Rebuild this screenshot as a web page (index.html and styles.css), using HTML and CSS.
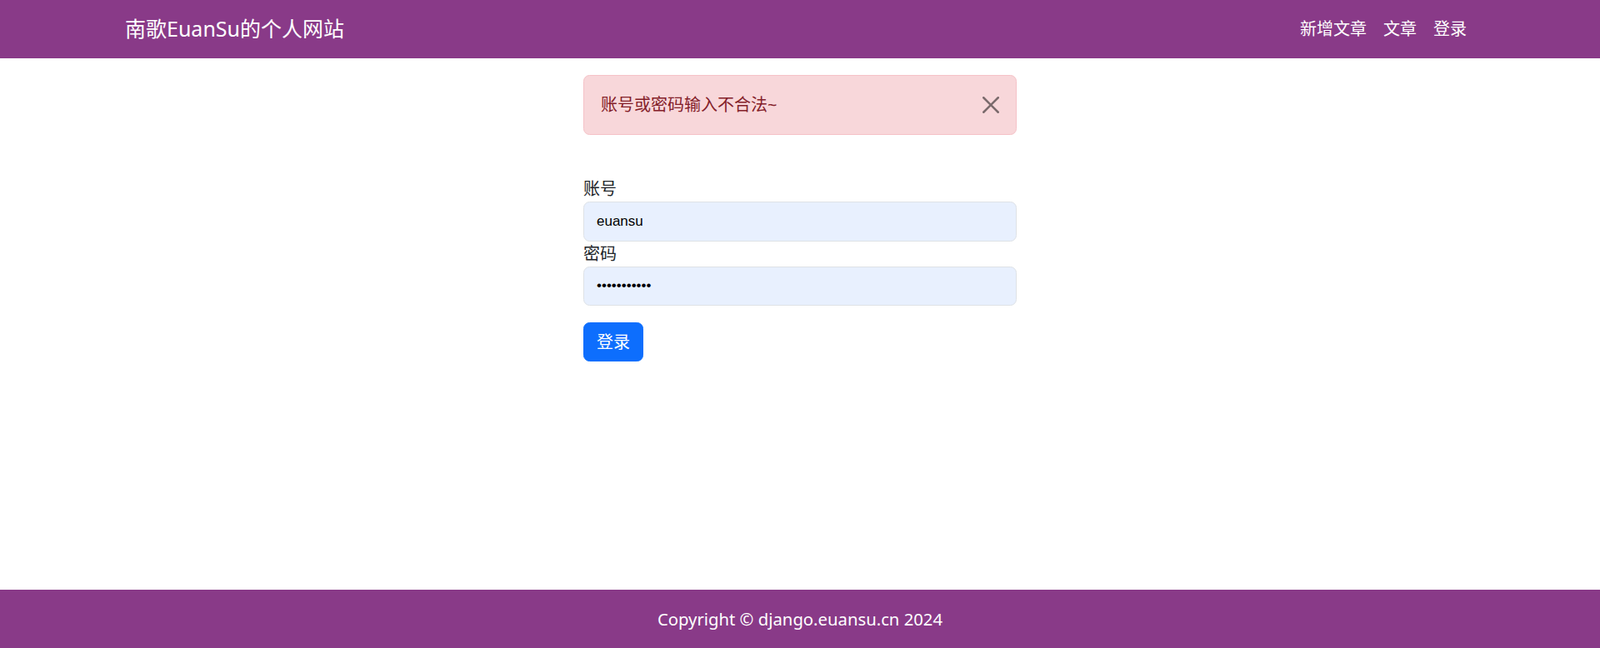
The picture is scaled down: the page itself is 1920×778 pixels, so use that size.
FILE: index.html
```html
<!DOCTYPE html>
<html lang="zh-CN">

<head>
    <meta charset="UTF-8">
    <meta name="viewport" content="width=device-width, initial-scale=1.0">
    <title>登录 - 南歌EuanSu的个人网站</title>
    <link rel="stylesheet" href="styles.css">
</head>

<body>
    <nav class="navbar">
        <div class="container nav-inner">
            <a class="navbar-brand" href="#">南歌EuanSu的个人网站</a>
            <ul class="nav-links">
                <li><a class="nav-link" href="#">新增文章</a></li>
                <li><a class="nav-link" href="#">文章</a></li>
                <li><a class="nav-link" href="#">登录</a></li>
            </ul>
        </div>
    </nav>

    <main class="content">
        <div class="login">
            <div class="alert">
                账号或密码输入不合法~
                <button type="button" class="btn-close" aria-label="Close">
                    <svg viewBox="0 0 16 16" width="20" height="20">
                        <path d="M.293.293a1 1 0 0 1 1.414 0L8 6.586 14.293.293a1 1 0 1 1 1.414 1.414L9.414 8l6.293 6.293a1 1 0 0 1-1.414 1.414L8 9.414l-6.293 6.293a1 1 0 0 1-1.414-1.414L6.586 8 .293 1.707a1 1 0 0 1 0-1.414z" fill="#000" />
                    </svg>
                </button>
            </div>

            <form class="login-form" method="post">
                <label for="username">账号</label>
                <input type="text" id="username" class="form-control" value="euansu">
                <label for="password">密码</label>
                <input type="password" id="password" class="form-control" value="euansu12345">
                <button type="submit" class="btn-primary">登录</button>
            </form>
        </div>
    </main>

    <footer class="footer">
        Copyright © django.euansu.cn 2024
    </footer>
</body>

</html>
```

FILE: styles.css
```css
* {
    margin: 0;
    padding: 0;
    box-sizing: border-box;
}

body {
    font-family: 'Segoe UI', 'Noto Sans', 'Noto Sans CJK SC', sans-serif;
    font-size: 20px;
    line-height: 30px;
    color: #212529;
    background: #fff;
    min-height: 100vh;
    display: flex;
    flex-direction: column;
}

a {
    text-decoration: none;
}

.container {
    width: 100%;
    max-width: 1650px;
    padding: 0 15px;
    margin: 0 auto;
}

.navbar {
    background-color: #893a88;
    padding: 10px 0;
}

.nav-inner {
    display: flex;
    justify-content: space-between;
    align-items: center;
}

.navbar-brand {
    color: #fff;
    font-size: 25px;
    line-height: 37.5px;
    padding: 6.25px 0;
}

.nav-links {
    list-style: none;
    display: flex;
}

.nav-link {
    display: block;
    color: #fff;
    padding: 10px;
}

.content {
    flex: 1;
}

.login {
    width: 520px;
    margin: 20px auto 0;
}

.alert {
    position: relative;
    padding: 20px 60px 20px 20px;
    color: #842029;
    background-color: #f8d7da;
    border: 1px solid #f5c2c7;
    border-radius: 7.5px;
    margin-bottom: 20px;
}

.btn-close {
    position: absolute;
    top: 0;
    right: 0;
    padding: 25px 20px;
    background: transparent;
    border: none;
    opacity: 0.5;
    cursor: pointer;
    display: flex;
}

.login-form {
    margin-top: 50px;
}

.login-form label {
    display: block;
}

.form-control {
    display: block;
    width: 100%;
    height: 47.5px;
    padding: 7.5px 15px;
    font-family: 'Liberation Sans', Arial, sans-serif;
    font-size: 17px;
    color: #000;
    background-color: #e8f0fe;
    border: 1px solid #dee2e6;
    border-radius: 7.5px;
    outline: none;
}

.btn-primary {
    margin-top: 20px;
    padding: 7.5px 15px;
    font-family: inherit;
    font-size: 20px;
    line-height: 30px;
    color: #fff;
    background-color: #0d6efd;
    border: 1px solid #0d6efd;
    border-radius: 7.5px;
    cursor: pointer;
}

.footer {
    height: 70px;
    background-color: #893a88;
    color: #fff;
    font-size: 20.3px;
    display: flex;
    justify-content: center;
    align-items: center;
}
```
